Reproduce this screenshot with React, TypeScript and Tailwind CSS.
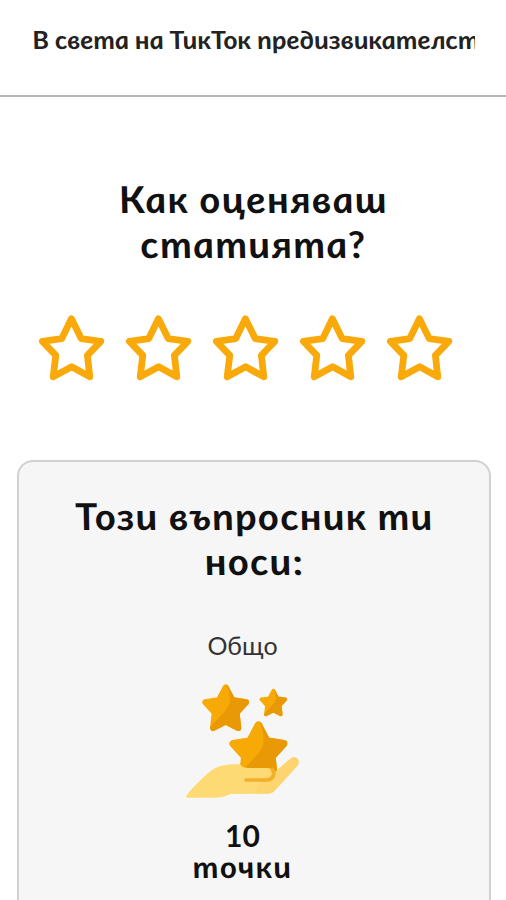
import React from 'react';

function RatingStar() {
  return (
    <svg width="67" height="67" viewBox="0 0 67 67" className="block">
      <path
        d="M33.4 4.8 L43.2 24.6 L62.8 27.3 L49.4 41.4 L51.8 62.8 L33.7 52.8 L15.2 62.8 L17.8 41.4 L4.4 27.3 L23.8 24.6 Z"
        fill="none"
        stroke="#f9a90a"
        strokeWidth="6.8"
        strokeLinejoin="round"
      />
    </svg>
  );
}

const STAR =
  'M0 -45 L19 -9 Q20 -7 23 -6 L61 0 L34 30 Q33 31 33 34 L38 77 L0 58 L-38 77 L-33 34 Q-33 31 -34 30 L-61 0 L-23 -6 Q-20 -7 -19 -9 Z';

function SolidStar({ id, transform }: { id: string; transform: string }) {
  return (
    <g transform={transform}>
      <clipPath id={id}>
        <path d="M0 -60 C10 -35 14 -18 13 -5 C11 20 -20 43 -48 76 L-48 95 H80 V-60 Z" />
      </clipPath>
      <path d={STAR} fill="#f7a906" stroke="#f7a906" strokeWidth="18" strokeLinejoin="round" />
      <g clipPath={`url(#${id})`}>
        <path d={STAR} fill="#e99905" stroke="#e99905" strokeWidth="18" strokeLinejoin="round" />
      </g>
    </g>
  );
}

function HandWithStars() {
  return (
    <svg width="125" height="130" viewBox="0 0 375 390" className="block">
      <SolidStar id="shade-left" transform="translate(137 82)" />
      <SolidStar id="shade-small" transform="translate(280 73) scale(.59)" />
      <SolidStar id="shade-front" transform="translate(235 206) scale(1.24)" />
      <path
        d="M22 368 C17 368 18 362 23 357 C50 325 75 300 100 283 C125 268 150 268 180 268 C186 277 194 279 205 279 H265 C272 280 277 285 284 292 L330 252 C346 238 366 255 351 274 L286 345 C278 355 270 356 258 356 L152 357 C136 366 120 368 100 368 Z"
        fill="#fdda74"
      />
      <path d="M284 292 L330 252 C346 238 366 255 351 274 L286 345 C278 355 270 356 258 356 L225 356 L240 318 Z" fill="#fdd06a" opacity=".6" />
      <path d="M198 315 H262 C279 314 286 297 277 283" fill="none" stroke="#f3af28" strokeWidth="11" strokeLinecap="round" />
    </svg>
  );
}

// Upright cursive letterforms: the italic glyphs with their slant taken out.
function Upright({ children }: { children: string }) {
  return <span className="block scale-x-[1.08] skew-x-[8deg] whitespace-nowrap italic">{children}</span>;
}

export default function App() {
  return (
    <div lang="bg" className="h-[900px] w-full overflow-hidden bg-white font-['Lato',sans-serif] text-[#111]">
      <header className="h-[97px] border-b-2 border-[#b5b5b5] px-8 pt-[21px]">
        <div className="w-[443px] overflow-hidden text-[25px] leading-[36px] font-bold tracking-[0.05px] whitespace-nowrap text-[#222]">
          <span className="inline-block origin-left scale-x-[1.08] skew-x-[8deg] italic">
            В света на ТикТок предизвикателст
          </span>
        </div>
      </header>
      <section className="pt-[79px] text-center">
        <h1 className="text-[37px] leading-[45px] font-bold tracking-[1.3px]">
          <Upright>Как оценяваш</Upright>
          <Upright>статията?</Upright>
        </h1>
        <div className="mt-[48px] flex gap-5 pl-[38px]">
          {[1, 2, 3, 4, 5].map((n) => (
            <RatingStar key={n} />
          ))}
        </div>
      </section>
      <section className="mt-[79px] ml-[17px] h-[480px] w-[474px] rounded-2xl border-2 border-[#d0d0d0] bg-[#f6f6f6] pt-[31px] text-center">
        <h2 className="text-[37px] leading-[45px] font-bold tracking-[1.3px]">
          <Upright>Този въпросник ти</Upright>
          <Upright>носи:</Upright>
        </h2>
        <div className="mt-[46px] flex flex-col items-center pr-[23px]">
          <p className="text-[25px] leading-[32px] text-[#333]">Общо</p>
          <div className="mt-[14px]">
            <HandWithStars />
          </div>
          <div className="mt-[15px] text-[30px] leading-[31px] font-bold">
            <p>10</p>
            <div className="tracking-[1.3px]">
              <Upright>точки</Upright>
            </div>
          </div>
        </div>
      </section>
    </div>
  );
}
